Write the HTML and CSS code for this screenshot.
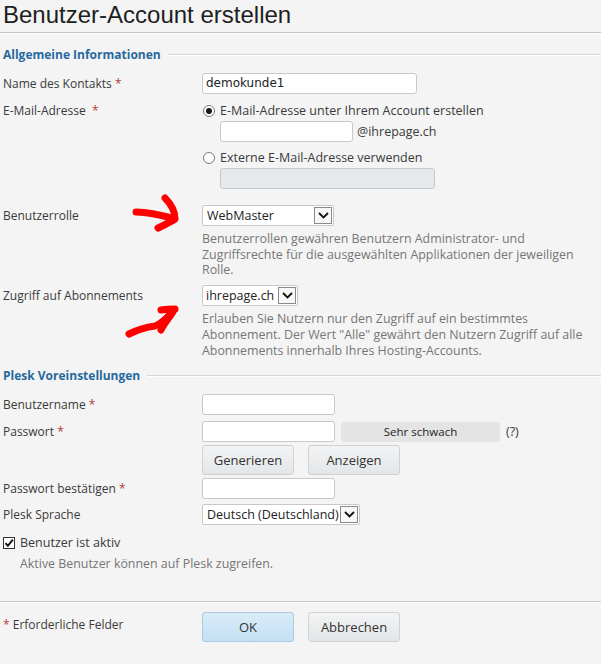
FILE: index.html
```html
<!DOCTYPE html>
<html lang="de">
<head>
    <meta charset="UTF-8">
    <title>Benutzer-Account erstellen</title>
    <link rel="stylesheet" href="styles.css">
</head>
<body>
    <h1 class="page-title">Benutzer-Account erstellen</h1>

    <form class="form">
        <div class="legend"><span>Allgemeine Informationen</span></div>

        <div class="form-row row-name">
            <label class="label">Name des Kontakts <span class="req">*</span></label>
            <div class="field">
                <div class="input wide value">demokunde1</div>
            </div>
        </div>

        <div class="form-row row-email">
            <label class="label">E-Mail-Adresse&nbsp; <span class="req">*</span></label>
            <div class="field">
                <div class="radio-line">
                    <span class="radio checked"></span>
                    <span>E-Mail-Adresse unter Ihrem Account erstellen</span>
                </div>
                <div class="indent mail-line">
                    <div class="input small"></div>
                    <span>@ihrepage.ch</span>
                </div>
                <div class="radio-line radio-second">
                    <span class="radio"></span>
                    <span>Externe E-Mail-Adresse verwenden</span>
                </div>
                <div class="indent">
                    <div class="input wide disabled"></div>
                </div>
            </div>
        </div>

        <div class="form-row row-role">
            <label class="label">Benutzerrolle</label>
            <div class="field">
                <div class="select role-select">
                    <span>WebMaster</span>
                    <span class="select-arrow"><svg width="11" height="7" viewBox="0 0 11 7"><path d="M1 1l4.5 4.5L10 1" fill="none" stroke="#111" stroke-width="1.8"/></svg></span>
                </div>
                <p class="hint">Benutzerrollen gewähren Benutzern Administrator- und Zugriffsrechte für die ausgewählten Applikationen der jeweiligen Rolle.</p>
            </div>
            <svg class="marker marker-one" width="60" height="45" viewBox="0 0 60 45">
                <path d="M7 22 C20 22 32 25 46 29 M36 8 C42 14 46 22 46 29 C40 33 33 36 29 38" fill="none" stroke="#f00" stroke-width="7" stroke-linecap="round" stroke-linejoin="round"/>
            </svg>
        </div>

        <div class="form-row row-subs">
            <label class="label">Zugriff auf Abonnements</label>
            <div class="field">
                <div class="select subs-select">
                    <span>ihrepage.ch</span>
                    <span class="select-arrow"><svg width="11" height="7" viewBox="0 0 11 7"><path d="M1 1l4.5 4.5L10 1" fill="none" stroke="#111" stroke-width="1.8"/></svg></span>
                </div>
                <p class="hint">Erlauben Sie Nutzern nur den Zugriff auf ein bestimmtes Abonnement. Der Wert "Alle" gewährt den Nutzern Zugriff auf alle Abonnements innerhalb Ihres Hosting-Accounts.</p>
            </div>
            <svg class="marker marker-two" width="60" height="45" viewBox="0 0 60 45">
                <path d="M4 38 C14 33 22 31 30 30 C36 28 42 22 49 14 M36 14 C42 13 46 13 50 13 M49 14 C46 20 40 26 36 34" fill="none" stroke="#f00" stroke-width="7" stroke-linecap="round" stroke-linejoin="round"/>
            </svg>
        </div>

        <div class="legend legend-plesk"><span>Plesk Voreinstellungen</span></div>

        <div class="form-row row-user">
            <label class="label">Benutzername <span class="req">*</span></label>
            <div class="field">
                <div class="input short"></div>
            </div>
        </div>

        <div class="form-row row-pass">
            <label class="label">Passwort <span class="req">*</span></label>
            <div class="field">
                <div class="pass-line">
                    <div class="input short"></div>
                    <div class="strength">Sehr schwach</div>
                    <span class="help">(?)</span>
                </div>
                <div class="button-line">
                    <button type="button" class="btn">Generieren</button>
                    <button type="button" class="btn">Anzeigen</button>
                </div>
            </div>
        </div>

        <div class="form-row row-confirm">
            <label class="label">Passwort bestätigen <span class="req">*</span></label>
            <div class="field">
                <div class="input short"></div>
            </div>
        </div>

        <div class="form-row row-lang">
            <label class="label">Plesk Sprache</label>
            <div class="field">
                <div class="select lang-select">
                    <span>Deutsch (Deutschland)</span>
                    <span class="select-arrow"><svg width="11" height="7" viewBox="0 0 11 7"><path d="M1 1l4.5 4.5L10 1" fill="none" stroke="#111" stroke-width="1.8"/></svg></span>
                </div>
            </div>
        </div>

        <div class="active-row">
            <div class="check-line">
                <span class="checkbox"><svg width="10" height="10" viewBox="0 0 10 10"><path d="M1.5 5.2l2.4 2.6L8.8 1.6" fill="none" stroke="#111" stroke-width="1.9"/></svg></span>
                <span>Benutzer ist aktiv</span>
            </div>
            <p class="hint active-hint">Aktive Benutzer können auf Plesk zugreifen.</p>
        </div>

        <div class="form-footer">
            <div class="label"><span class="req">*</span> Erforderliche Felder</div>
            <div class="button-line">
                <button type="button" class="btn btn-ok">OK</button>
                <button type="button" class="btn">Abbrechen</button>
            </div>
        </div>
    </form>
</body>
</html>
```
FILE: styles.css
```css
:root {
    --bg: #f4f4f4;
    --text: #3a3a3a;
    --hint: #767676;
    --legend: #26699e;
    --req: #b33a3a;
    --border: #c8c8c8;
}

* {
    margin: 0;
    padding: 0;
    box-sizing: border-box;
}

body {
    background: var(--bg);
    color: var(--text);
    font-family: "Open Sans", "Liberation Sans", sans-serif;
    font-size: 12.5px;
    line-height: 16px;
}

.page-title {
    font-family: "Liberation Sans", Arial, sans-serif;
    font-weight: normal;
    font-size: 24px;
    line-height: 28px;
    color: #1e1e1e;
    padding: 1px 3px 0;
    height: 33px;
    border-bottom: 1px solid #c6c6c6;
    box-shadow: 0 1px 0 #ffffff;
}

.legend {
    display: flex;
    align-items: center;
    gap: 7px;
    height: 16px;
    margin: 14px 0 0 3px;
    color: var(--legend);
    font-weight: bold;
    font-size: 12px;
}

.legend::after {
    content: "";
    flex: 1;
    border-top: 1px solid #d6d6d6;
    border-bottom: 1px solid #ffffff;
}

.form-row {
    position: relative;
    display: grid;
    grid-template-columns: 199px 1fr;
    padding-left: 3px;
}

.label {
    line-height: 21px;
    font-size: 12px;
}

.req {
    color: var(--req);
}

.input {
    height: 21px;
    background: #ffffff;
    border: 1px solid var(--border);
    border-radius: 3px;
    padding: 0 3px;
    line-height: 19px;
    color: #222;
}

.input.value {
    font-family: "DejaVu Sans", Verdana, sans-serif;
    font-size: 12px;
}

.input.wide {
    width: 215px;
}

.input.small {
    width: 133px;
}

.input.short {
    width: 133px;
}

.input.disabled {
    background: #e6e9eb;
}

.row-name {
    margin-top: 10px;
}

.row-email {
    margin-top: 6px;
}

.radio-line {
    display: flex;
    align-items: center;
    gap: 5px;
    height: 21px;
    padding-left: 1px;
}

.radio-second {
    margin-top: 5px;
}

.radio {
    width: 12px;
    height: 12px;
    border: 1px solid #7a7a7a;
    border-radius: 50%;
    background: #ffffff;
    display: flex;
    align-items: center;
    justify-content: center;
}

.radio.checked::after {
    content: "";
    width: 6px;
    height: 6px;
    border-radius: 50%;
    background: #1a1a1a;
}

.indent {
    padding-left: 18px;
}

.mail-line {
    display: flex;
    align-items: center;
    gap: 4px;
}

.row-role {
    margin-top: 16px;
}

.select {
    display: inline-flex;
    align-items: center;
    justify-content: space-between;
    height: 21px;
    background: #ffffff;
    border: 1px solid var(--border);
    border-radius: 2px;
    padding: 0 1px 0 4px;
    color: #222;
}

.select-arrow {
    width: 18px;
    height: 17px;
    border: 1px solid #8a8a8a;
    display: flex;
    align-items: center;
    justify-content: center;
    background: #f7f7f7;
}

.role-select {
    width: 132px;
}

.subs-select {
    width: 96px;
    padding-left: 3px;
    gap: 2px;
}

.lang-select {
    width: 158px;
}

.hint {
    color: var(--hint);
    line-height: 15.7px;
    margin-top: 5px;
    padding-right: 8px;
    font-size: 12.4px;
}

.marker {
    position: absolute;
    pointer-events: none;
}

.marker-one {
    left: 129px;
    top: -15px;
}

.marker-two {
    left: 125px;
    top: 11px;
}

.row-subs {
    margin-top: 7px;
}

.legend-plesk {
    margin-top: 10px;
}

.row-user {
    margin-top: 10px;
}

.row-pass {
    margin-top: 6px;
}

.pass-line {
    display: flex;
    align-items: center;
}

.strength {
    width: 159px;
    height: 20px;
    margin-left: 6px;
    background: #e4e4e4;
    border-radius: 3px;
    text-align: center;
    line-height: 20px;
    font-size: 11.5px;
    color: #1e1e1e;
}

.help {
    margin-left: 6px;
}

.button-line {
    display: flex;
    gap: 14px;
    margin-top: 3px;
}

.btn {
    width: 92px;
    height: 30px;
    border: 1px solid #cfd2d4;
    border-radius: 3px;
    background: linear-gradient(#f2f3f4, #e3e6e8);
    font-family: inherit;
    font-size: 13px;
    color: #333;
}

.btn-ok {
    background: linear-gradient(#d9ecf9, #c3e0f4);
    border-color: #a9cae2;
}

.row-confirm {
    margin-top: 3px;
}

.row-lang {
    margin-top: 5px;
}

.active-row {
    padding-left: 3px;
    margin-top: 8px;
}

.check-line {
    display: flex;
    align-items: center;
    gap: 5px;
    height: 20px;
}

.checkbox {
    width: 12px;
    height: 12px;
    border: 1px solid #333;
    background: #ffffff;
    display: flex;
    align-items: center;
    justify-content: center;
}

.active-hint {
    padding-left: 17px;
    margin-top: 3px;
}

.form-footer {
    display: grid;
    grid-template-columns: 199px 1fr;
    padding: 10px 0 0 3px;
    margin-top: 29px;
    border-top: 1px solid #c6c6c6;
    box-shadow: inset 0 1px 0 #ffffff;
}

.form-footer .button-line {
    margin-top: 0;
}

.form-footer .label {
    padding-top: 2px;
}
```
